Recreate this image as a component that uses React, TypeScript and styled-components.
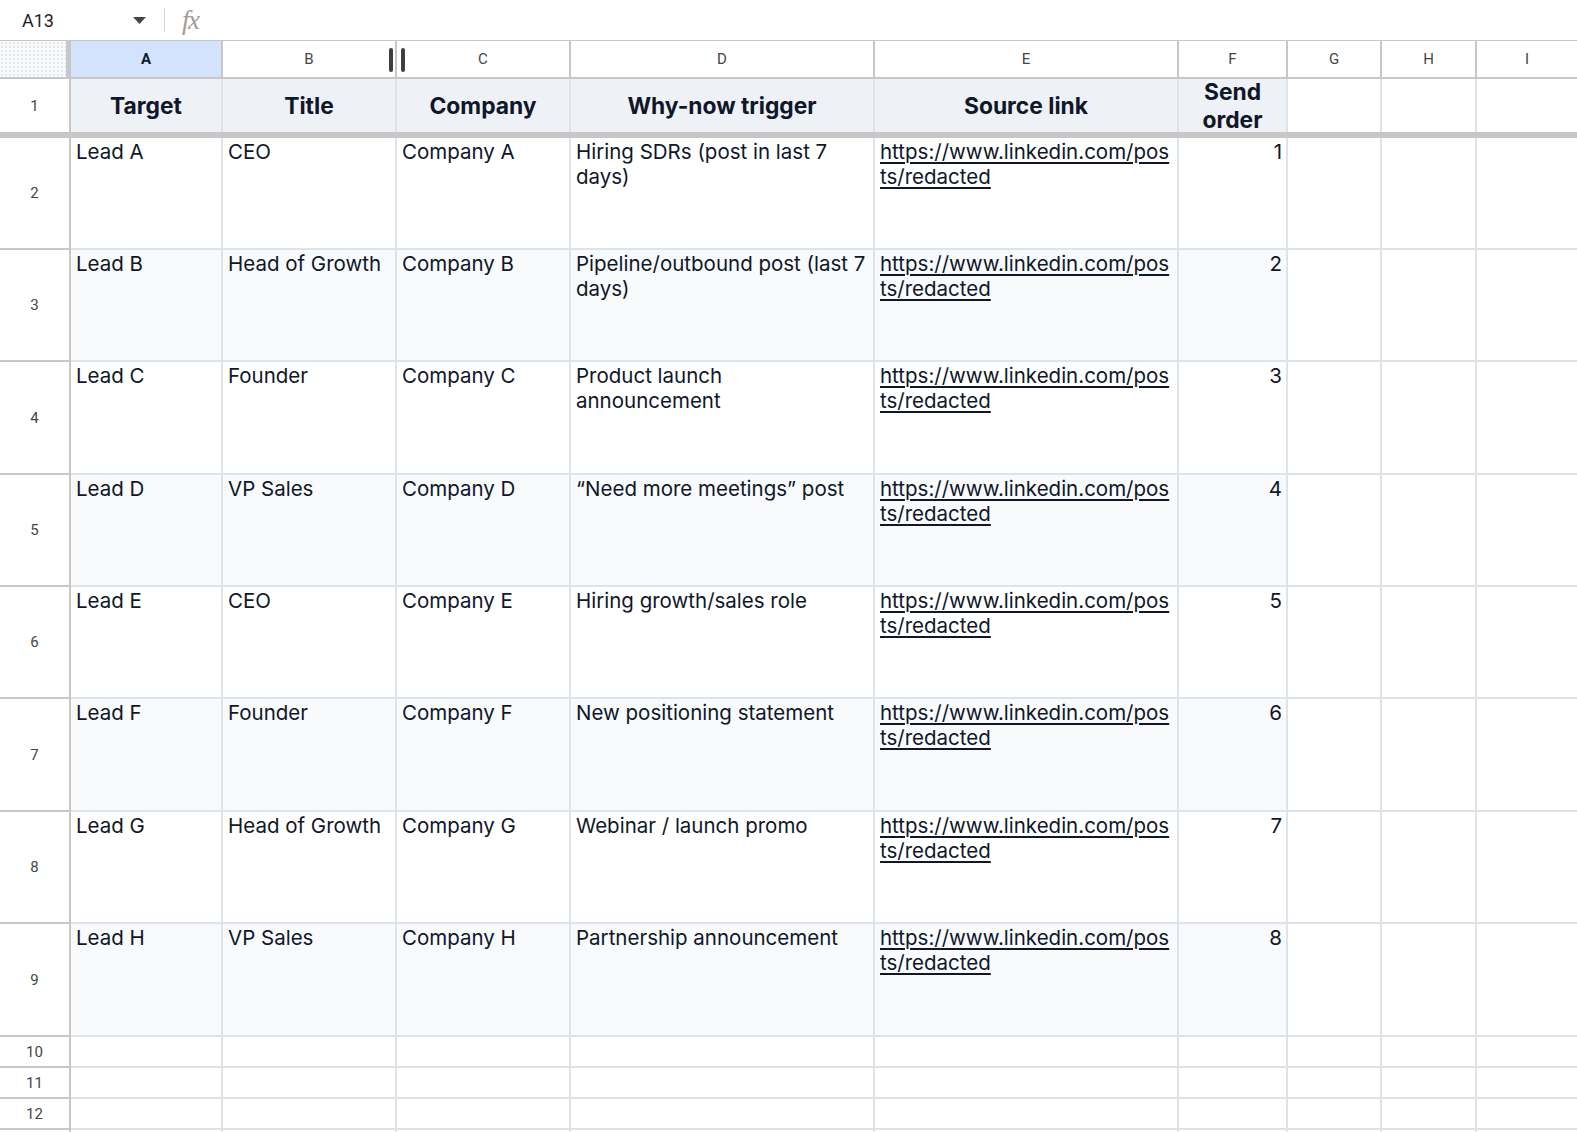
import React from "react";
import styled, { createGlobalStyle } from "styled-components";

const INK = "#0f1729";
const GRID = "#dde3eb";
const PLAIN = "#e1e1e1";
const CHROME = "#c7c7c7";

const GlobalStyle = createGlobalStyle`
  *, *::before, *::after { box-sizing: border-box; }
  html, body { margin: 0; padding: 0; background: #fff; }
  body { font-family: Inter, "Noto Sans", sans-serif; overflow: hidden; }
`;

const FormulaBar = styled.div`
  height: 41px;
  display: flex;
  align-items: center;
  border-bottom: 1px solid ${CHROME};
`;

const NameBox = styled.div`
  width: 164px;
  padding: 0 18px 0 22px;
  display: flex;
  align-items: center;
  justify-content: space-between;
  font: 18px Roboto, sans-serif;
  color: #1f1f1f;
`;

const Divider = styled.span`
  width: 1px;
  height: 24px;
  background: #d6d6d6;
`;

const Fx = styled.span`
  margin-left: 17px;
  font: italic 27px/1 "Liberation Serif", serif;
  letter-spacing: -1.5px;
  color: #a39d96;
`;

const Sheet = styled.div`
  display: grid;
  grid-template-columns: 71px 152px 174px 174px 304px 304px 109px 94px 95px 1fr;
  grid-template-rows: 38px 53px 6px 112px 112px 113px 112px 112px 113px 112px 113px 31px 31px 31px 31px;
`;

const Corner = styled.div`
  border-right: 5px solid ${CHROME};
  border-bottom: 2px solid ${CHROME};
  background-color: #f8f9fa;
  background-image: radial-gradient(#e2e7ec 0.7px, transparent 0.9px);
  background-size: 4px 4px;
`;

const ColHead = styled.div<{ $active?: boolean; $last?: boolean }>`
  position: relative;
  display: flex;
  align-items: center;
  justify-content: center;
  border-right: ${p => (p.$last ? "none" : `2px solid ${CHROME}`)};
  border-bottom: 2px solid ${CHROME};
  background: ${p => (p.$active ? "#d3e3fd" : "#fff")};
  color: ${p => (p.$active ? "#0b1a33" : "#444746")};
  font: ${p => (p.$active ? 700 : 400)} 15px Roboto, sans-serif;
`;

const Grip = styled.div`
  position: absolute;
  right: -10px;
  top: 7px;
  z-index: 2;
  display: flex;
  gap: 8px;
  span {
    width: 4px;
    height: 24px;
    border-radius: 2px;
    background: #3c4043;
  }
`;

const RowNum = styled.div<{ $flush?: boolean }>`
  display: flex;
  align-items: center;
  justify-content: center;
  border-right: 2px solid ${CHROME};
  border-bottom: ${p => (p.$flush ? "none" : `2px solid ${CHROME}`)};
  font: 15px Roboto, sans-serif;
  color: #444746;
`;

const HeadCell = styled.div`
  display: flex;
  align-items: center;
  justify-content: center;
  text-align: center;
  padding: 0 6px;
  overflow: hidden;
  background: #eef1f6;
  border-right: 2px solid ${GRID};
  font: 700 22.8px/28px Inter, sans-serif;
  color: ${INK};
`;

const Cell = styled.div<{ $shade?: boolean; $num?: boolean }>`
  padding: 1px 4px 0 5px;
  overflow: hidden;
  background: ${p => (p.$shade ? "#f8fafc" : "#fff")};
  border-right: 2px solid ${GRID};
  border-bottom: 2px solid ${GRID};
  text-align: ${p => (p.$num ? "right" : "left")};
  font: 20.5px/25px Inter, sans-serif;
  color: ${INK};
`;

const Link = styled.a`
  color: inherit;
  text-decoration: underline;
  text-decoration-thickness: 2px;
  text-underline-offset: 3px;
  word-break: break-all;
`;

const Blank = styled.div<{ $last?: boolean; $flush?: boolean }>`
  background: #fff;
  border-right: ${p => (p.$last ? "none" : `2px solid ${PLAIN}`)};
  border-bottom: ${p => (p.$flush ? "none" : `2px solid ${PLAIN}`)};
`;

const FreezeBar = styled.div`
  grid-column: 1 / -1;
  background: ${CHROME};
`;

const letters = ["A", "B", "C", "D", "E", "F", "G", "H", "I"];
const headers = ["Target", "Title", "Company", "Why-now trigger", "Source link", "Send order"];

const leads = [
  { who: "Lead A", title: "CEO", company: "Company A", why: "Hiring SDRs (post in last 7 days)" },
  { who: "Lead B", title: "Head of Growth", company: "Company B", why: "Pipeline/outbound post (last 7 days)" },
  { who: "Lead C", title: "Founder", company: "Company C", why: "Product launch announcement" },
  { who: "Lead D", title: "VP Sales", company: "Company D", why: "\u201cNeed more meetings\u201d post" },
  { who: "Lead E", title: "CEO", company: "Company E", why: "Hiring growth/sales role" },
  { who: "Lead F", title: "Founder", company: "Company F", why: "New positioning statement" },
  { who: "Lead G", title: "Head of Growth", company: "Company G", why: "Webinar / launch promo" },
  { who: "Lead H", title: "VP Sales", company: "Company H", why: "Partnership announcement" },
];

const url = "https://www.linkedin.com/posts/redacted";

export default function App() {
  return (
    <>
      <GlobalStyle />
      <FormulaBar>
        <NameBox>
          A13
          <svg width="13" height="7" viewBox="0 0 13 7">
            <polygon points="0,0 13,0 6.5,7" fill="#444746" />
          </svg>
        </NameBox>
        <Divider />
        <Fx>fx</Fx>
      </FormulaBar>

      <Sheet>
        <Corner />
        {letters.map((l, i) => (
          <ColHead key={l} $active={i === 0} $last={i === letters.length - 1}>
            {l}
            {l === "B" && (
              <Grip>
                <span />
                <span />
              </Grip>
            )}
          </ColHead>
        ))}

        <RowNum $flush>1</RowNum>
        {headers.map(h => (
          <HeadCell key={h}>{h}</HeadCell>
        ))}
        <Blank $flush />
        <Blank $flush />
        <Blank $flush $last />

        <FreezeBar />

        {leads.map((r, i) => {
          const shade = i % 2 === 1;
          return (
            <React.Fragment key={r.who}>
              <RowNum>{i + 2}</RowNum>
              <Cell $shade={shade}>{r.who}</Cell>
              <Cell $shade={shade}>{r.title}</Cell>
              <Cell $shade={shade}>{r.company}</Cell>
              <Cell $shade={shade}>{r.why}</Cell>
              <Cell $shade={shade}>
                <Link href="#">{url}</Link>
              </Cell>
              <Cell $shade={shade} $num>
                {i + 1}
              </Cell>
              <Blank />
              <Blank />
              <Blank $last />
            </React.Fragment>
          );
        })}

        {[10, 11, 12, 13].map(n => (
          <React.Fragment key={n}>
            <RowNum>{n < 13 ? n : null}</RowNum>
            {letters.map((l, i) => (
              <Blank key={l} $last={i === letters.length - 1} />
            ))}
          </React.Fragment>
        ))}
      </Sheet>
    </>
  );
}
